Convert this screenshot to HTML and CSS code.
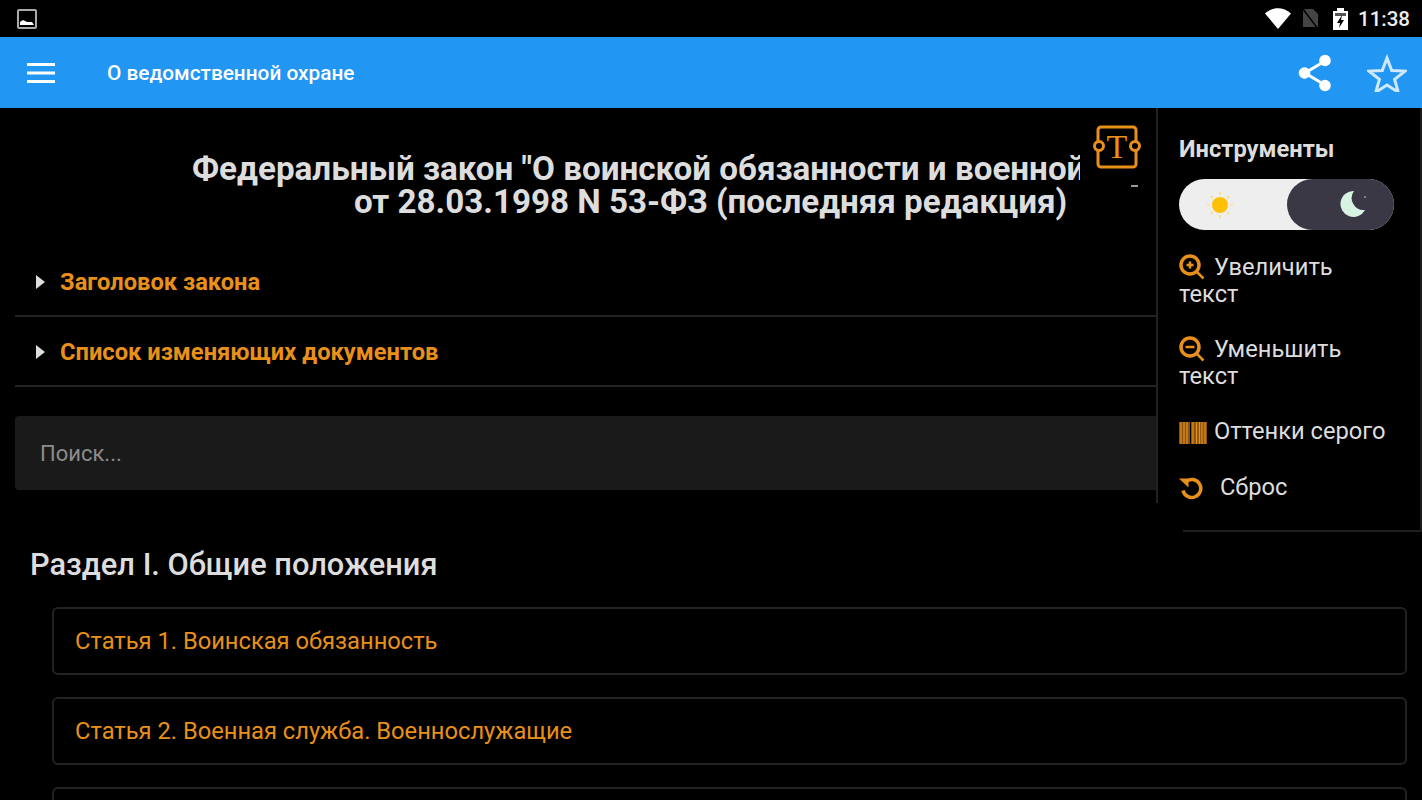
FILE: index.html
```html
<!DOCTYPE html>
<html lang="ru">
<head>
    <meta charset="utf-8">
    <title>О ведомственной охране</title>
    <link rel="stylesheet" href="styles.css">
</head>
<body>
    <div class="status-bar">
        <svg class="status-pic" width="20" height="20" viewBox="0 0 20 20"><rect x="1" y="1" width="18" height="18" rx="1" fill="none" stroke="#aaa" stroke-width="2"/><path d="M3 16v-3l3-2 2 1 2 1 5 0 2 3z" fill="#fff"/></svg>
        <div class="status-right">
            <svg class="st-wifi" width="26" height="21" viewBox="0 0 26 21"><path d="M0 5.500C8-1.500 18-1.500 26 5.500L13 21z" fill="#fff"/></svg>
            <svg class="st-sim" width="17" height="20" viewBox="0 0 17 20"><path d="M1 18V0h10l5 5v13z" fill="#444"/><path d="M1 0l15 20" stroke="#000" stroke-width="1.500"/></svg>
            <svg class="st-battery" width="15" height="22" viewBox="0 0 15 22"><path d="M0 3h4V0h7v3h4v19H0z" fill="#fff"/><path d="M2 5h11v3H2z" fill="#555"/><path d="M9 7l-5 8h3l-1 5 5-8H8z" fill="#000"/></svg>
            <span class="clock">11:38</span>
        </div>
    </div>
    <header class="app-bar">
        <svg class="menu-icon" width="28" height="20" viewBox="0 0 28 20"><path d="M0 1.500h28M0 10h28M0 18.500h28" stroke="#fff" stroke-width="3"/></svg>
        <h1 class="app-title">О ведомственной охране</h1>
        <svg class="share-icon" width="34" height="38" viewBox="0 0 34 38"><path d="M27 7L7 19l20 12" fill="none" stroke="#fff" stroke-width="3"/><circle cx="27" cy="6.500" r="5.800" fill="#fff"/><circle cx="6.500" cy="19" r="5.800" fill="#fff"/><circle cx="27" cy="31.500" r="5.800" fill="#fff"/></svg>
        <svg class="star-icon" width="40" height="38" viewBox="0 0 40 38"><path d="M20 4l4.700 12.500 13.300.600-10.400 8.300 3.600 12.800L20 31l-11.200 7.200 3.600-12.800L2 17.100l13.300-.6z" fill="none" stroke="#cfe8fc" stroke-width="3"/></svg>
    </header>
    <main class="content">
        <div class="doc-title">
            <div class="doc-title-line">Федеральный закон "О воинской обязанности и военной</div>
            <div class="doc-title-sub">от 28.03.1998 N 53-ФЗ (последняя редакция)</div>
        </div>
        <div class="fold-row"><span class="fold-arrow"></span>Заголовок закона</div>
        <div class="fold-row"><span class="fold-arrow"></span>Список изменяющих документов</div>
        <div class="search-box">Поиск...</div>
        <h2 class="section-title">Раздел I. Общие положения</h2>
        <div class="article">Статья 1. Воинская обязанность</div>
        <div class="article">Статья 2. Военная служба. Военнослужащие</div>
        <div class="article"></div>
    </main>
    <svg class="tools-toggle" width="48" height="46" viewBox="0 0 48 46"><rect x="5" y="3" width="38" height="40" rx="3" fill="none" stroke="#e8901a" stroke-width="3"/><circle cx="6" cy="22" r="4.500" fill="#000" stroke="#e8901a" stroke-width="3"/><circle cx="42" cy="22" r="4.500" fill="#000" stroke="#e8901a" stroke-width="3"/><text x="24" y="34" class="tools-t">T</text></svg>
    <span class="stray-dash"></span>
    <aside class="tools">
        <div class="tools-title">Инструменты</div>
        <div class="theme-switch">
            <svg class="sun" width="28" height="28" viewBox="0 0 28 28"><circle cx="14" cy="14" r="8" fill="#ffc107"/><path d="M14 1v3M14 24v3M1 14h3M24 14h3M5 5l2 2M21 21l2 2M5 23l2-2M21 7l2-2" stroke="#ffd95e" stroke-width="1.200"/></svg>
            <div class="switch-knob">
                <svg width="30" height="30" viewBox="0 0 30 30"><path d="M17 2a13 13 0 1 0 11 19A12 12 0 0 1 17 2z" fill="#d8f3e4"/><circle cx="28" cy="8" r=".8" fill="#ddd"/></svg>
            </div>
        </div>
        <div class="tool-item">
            <svg class="tool-icon" width="26" height="26" viewBox="0 0 26 26"><circle cx="11" cy="11" r="9" fill="none" stroke="#e8901a" stroke-width="3.500"/><path d="M17.500 17.500l7 7M7.500 11h7M11 7.500v7" stroke="#e8901a" stroke-width="2.500"/></svg>
            Увеличить<br>текст
        </div>
        <div class="tool-item">
            <svg class="tool-icon" width="26" height="26" viewBox="0 0 26 26"><circle cx="11" cy="11" r="9" fill="none" stroke="#e8901a" stroke-width="3.500"/><path d="M17.500 17.500l7 7M6.500 11h9" stroke="#e8901a" stroke-width="2.500"/></svg>
            Уменьшить<br>текст
        </div>
        <div class="tool-item tool-gray">
            <svg class="tool-icon" width="28" height="22" viewBox="0 0 28 22"><rect width="28" height="22" fill="#8a5410"/><path d="M2 0v22M5 0v22M8 0v22M14 0v22M17.500 0v22M20.500 0v22M23 0v22M26 0v22" stroke="#e8901a" stroke-width="1.200"/><path d="M11.500 0v22" stroke="#000" stroke-width="1"/></svg>
            Оттенки серого
        </div>
        <div class="tool-item tool-reset">
            <svg class="tool-icon" width="26" height="24" viewBox="0 0 26 24"><path d="M7 5.500a9 9 0 1 1-3 9" fill="none" stroke="#e8901a" stroke-width="3.500"/><path d="M0 2.500l9.500 0 0 9z" fill="#e8901a"/></svg>
            Сброс
        </div>
    </aside>
</body>
</html>
```

FILE: styles.css
```css
* {
    box-sizing: border-box;
}

html, body {
    margin: 0;
    height: 800px;
    overflow: hidden;
    background-color: #000;
    font-family: "Roboto", "Liberation Sans", sans-serif;
}

body {
    position: relative;
}

.status-bar {
    height: 37px;
    display: flex;
    align-items: center;
    justify-content: space-between;
    padding: 0 12px 0 17px;
    background-color: #000;
}

.status-right {
    display: flex;
    align-items: center;
}

.st-sim {
    margin-left: 11px;
}

.st-battery {
    margin-left: 14px;
}

.clock {
    margin-left: 10px;
    color: #eee;
    font-size: 20.500px;
    font-weight: 500;
}

.app-bar {
    height: 71px;
    display: flex;
    align-items: center;
    padding: 0 15px 0 27px;
    background-color: #2196f3;
}

.menu-icon {
    flex-shrink: 0;
}

.app-title {
    flex: 1;
    margin: 0 0 0 52px;
    color: #fff;
    font-size: 20.800px;
    font-weight: 500;
}

.star-icon {
    margin-left: 35px;
}

.content {
    padding: 0 15px;
}

.doc-title {
    width: 1065px;
    height: 139px;
    padding-top: 44px;
    overflow: hidden;
    color: #ddd;
    font-size: 33.200px;
    font-weight: 700;
    line-height: 33px;
    white-space: nowrap;
}

.doc-title-line {
    padding-left: 177px;
}

.doc-title-sub {
    padding-left: 339px;
}

.fold-row {
    height: 70px;
    padding-top: 2px;
    display: flex;
    align-items: center;
    border-bottom: 2px solid #222;
    color: #e8901a;
    font-size: 23.700px;
    font-weight: 700;
}

.fold-arrow {
    width: 0;
    height: 0;
    margin: 0 15px 0 21px;
    border-left: 9px solid #ddd;
    border-top: 7px solid transparent;
    border-bottom: 7px solid transparent;
}

.search-box {
    height: 74px;
    margin-top: 29px;
    padding-left: 25px;
    display: flex;
    align-items: center;
    border-radius: 4px;
    background-color: #1a1a1a;
    color: #8c8c8c;
    font-size: 22px;
}

.section-title {
    margin: 55px 0 22px 15px;
    color: #ddd;
    font-size: 30.800px;
    font-weight: 500;
    line-height: 40px;
}

.article {
    height: 68px;
    margin: 0 0 22px 37px;
    padding-left: 21px;
    display: flex;
    align-items: center;
    border: 2px solid #222;
    border-radius: 6px;
    color: #e8901a;
    font-size: 23.700px;
}

.tools-toggle {
    position: absolute;
    left: 1093px;
    top: 124px;
}

.tools-t {
    fill: #e8901a;
    font-family: "Liberation Serif", serif;
    font-size: 34px;
    text-anchor: middle;
}

.stray-dash {
    position: absolute;
    left: 1131px;
    top: 185px;
    width: 7px;
    height: 2px;
    background-color: #999;
}

.tools {
    position: absolute;
    left: 1156px;
    top: 108px;
    width: 266px;
    height: 424px;
    padding: 26px 0 0 23px;
    border-right: 2px solid #1a1a1a;
    background-color: #000;
    color: #ddd;
    font-size: 23.700px;
}

.tools::before {
    content: "";
    position: absolute;
    left: 0;
    top: 0;
    width: 2px;
    height: 395px;
    background-color: #222;
}

.tools::after {
    content: "";
    position: absolute;
    left: 27px;
    right: 0;
    bottom: 0;
    height: 2px;
    background-color: #1f1f1f;
}

.tools-title {
    font-weight: 700;
    line-height: 30px;
}

.theme-switch {
    position: relative;
    width: 215px;
    height: 51px;
    margin: 15px 0 24px;
    padding: 12px 0 0 27px;
    border-radius: 26px;
    background-color: #eee;
}

.switch-knob {
    position: absolute;
    right: 0;
    top: 0;
    width: 107px;
    height: 51px;
    padding: 10px 0 0 50px;
    border-radius: 26px;
    background-color: #3a3845;
}

.tool-item {
    margin-bottom: 28px;
    line-height: 27px;
}

.tool-icon {
    margin-right: 3px;
    vertical-align: -5px;
}

.tool-gray {
    margin-bottom: 29px;
}

.tool-gray .tool-icon {
    margin-right: 1px;
}

.tool-reset .tool-icon {
    margin-right: 9px;
}
```
